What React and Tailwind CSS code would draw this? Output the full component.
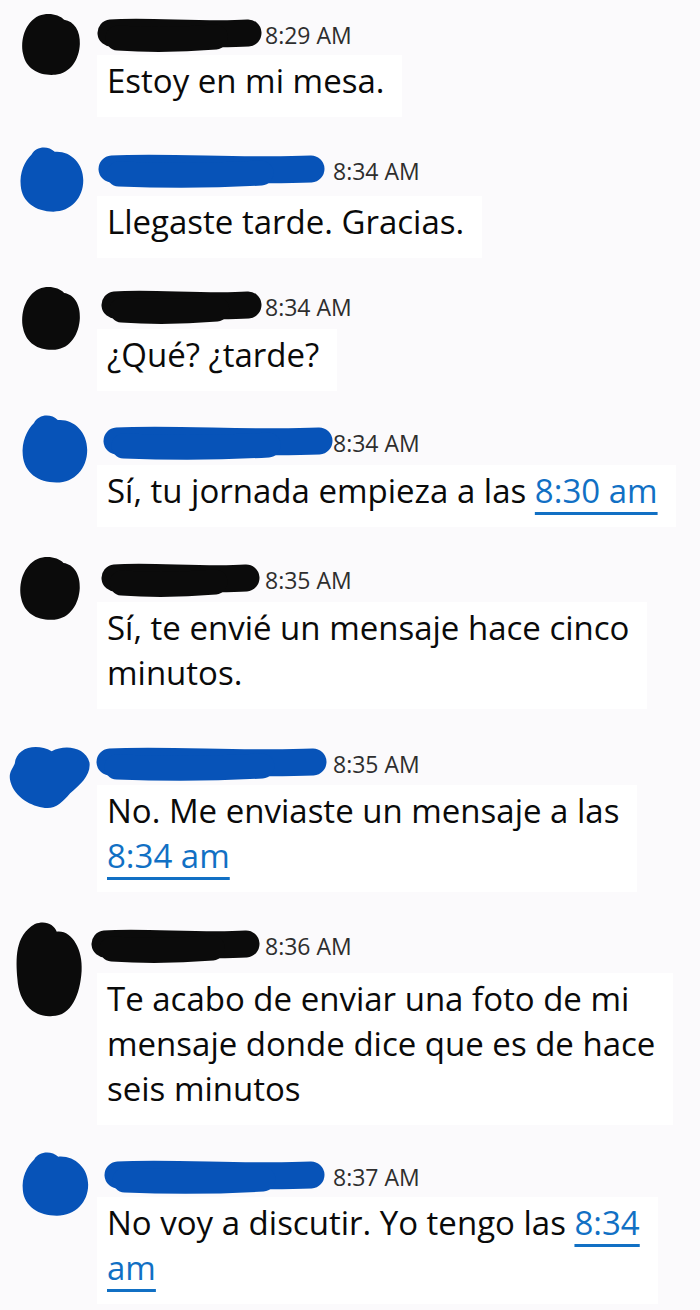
import React from 'react';

const BLACK = '#0b0b0b';
const BLUE = '#0753b8';

const blobs = {
  round: 'M30 6 C45 0 62 4 70 12 C86 14 96 30 95 50 C94 74 80 96 56 98 C32 100 10 90 5 66 C0 44 8 16 30 6 Z',
  bumpy: 'M20 14 C26 2 44 0 54 10 C76 8 96 26 96 52 C96 78 78 98 52 98 C26 98 6 84 4 60 C2 40 10 24 20 14 Z',
  heart: 'M8 34 C10 10 34 4 52 16 C68 6 92 10 97 32 C99 50 86 64 74 76 C64 90 56 99 44 97 C28 95 8 82 3 60 C0 48 5 42 8 34 Z',
  tall: 'M30 4 C44 0 56 4 60 12 C80 10 96 30 94 52 C92 76 80 98 54 98 C30 100 8 86 6 60 C4 40 2 16 30 4 Z',
};

// scribbled-over avatar
function Avatar({ color, shape, w, h, className }) {
  return (
    <svg width={w} height={h} viewBox="0 0 100 100" preserveAspectRatio="none" className={className}>
      <path d={blobs[shape]} fill={color} />
    </svg>
  );
}

// scribbled-over name
function NameScribble({ color, w, className }) {
  const h = 34;
  return (
    <svg width={w} height={h} viewBox={`0 0 ${w} ${h}`} className={className}>
      <g stroke={color} strokeLinecap="round" fill="none">
        <path d={`M15 15 C ${w * 0.3} 12, ${w * 0.65} 18, ${w - 14} 15`} strokeWidth="27" />
        <path d={`M22 20 C ${w * 0.3} 22, ${w * 0.5} 22, ${w * 0.72} 19`} strokeWidth="25" />
      </g>
    </svg>
  );
}

function Link({ children }) {
  return (
    <span className="text-[#1170c4] underline decoration-[3px] underline-offset-[9px]">{children}</span>
  );
}

export default function App() {
  const messages = [
    {
      color: BLACK, time: '8:29 AM', block: 'mt-[20px]', bubble: 'mt-[5px]',
      avatar: { shape: 'round', w: 63, h: 64, cls: 'ml-[20px] -mt-[8px]' },
      name: { w: 166, cls: '-ml-px' },
      lines: [['Estoy en mi mesa.']],
    },
    {
      color: BLUE, time: '8:34 AM', block: 'mt-[39px]', bubble: 'mt-[10px]',
      avatar: { shape: 'bumpy', w: 68, h: 68, cls: 'ml-[18px] -mt-[11px]' },
      name: { w: 228, cls: '' },
      lines: [['Llegaste tarde. Gracias.']],
    },
    {
      color: BLACK, time: '8:34 AM', block: 'mt-[34px]', bubble: 'mt-[7px]',
      avatar: { shape: 'round', w: 63, h: 66, cls: 'ml-[20px] -mt-[7px]' },
      name: { w: 162, cls: 'ml-[3px]' },
      lines: [['¿Qué? ¿tarde?']],
    },
    {
      color: BLUE, time: '8:34 AM', block: 'mt-[37px]', bubble: 'mt-[7px]',
      avatar: { shape: 'bumpy', w: 70, h: 71, cls: 'ml-[20px] -mt-[15px]' },
      name: { w: 232, cls: 'ml-[5px]' },
      lines: [['Sí, tu jornada empieza a las ', { link: '8:30 am' }]],
    },
    {
      color: BLACK, time: '8:35 AM', block: 'mt-[38px]', bubble: 'mt-[7px]',
      avatar: { shape: 'round', w: 65, h: 66, cls: 'ml-[18px] -mt-[10px]' },
      name: { w: 160, cls: 'ml-[3px]' },
      lines: [['Sí, te envié un mensaje hace cinco'], ['minutos.']],
    },
    {
      color: BLUE, time: '8:35 AM', block: 'mt-[40px]', bubble: 'mt-[6px]',
      avatar: { shape: 'heart', w: 84, h: 70, cls: 'ml-[8px] -mt-[9px]' },
      name: { w: 232, cls: '-ml-[2px]' },
      lines: [['No. Me enviaste un mensaje a las'], [{ link: '8:34 am' }]],
    },
    {
      color: BLACK, time: '8:36 AM', block: 'mt-[39px]', bubble: 'mt-[12px]',
      avatar: { shape: 'tall', w: 73, h: 98, cls: 'ml-[13px] -mt-[11px]' },
      name: { w: 170, cls: '-ml-[7px]' },
      lines: [
        ['Te acabo de enviar una foto de mi'],
        ['mensaje donde dice que es de hace'],
        ['seis minutos'],
      ],
    },
    {
      color: BLUE, time: '8:37 AM', block: 'mt-[37px]', bubble: 'mt-[5px]',
      avatar: { shape: 'bumpy', w: 71, h: 67, cls: 'ml-[20px] -mt-[12px]' },
      name: { w: 222, cls: 'ml-[6px]' },
      lines: [['No voy a discutir. Yo tengo las ', { link: '8:34' }], [{ link: 'am' }]],
    },
  ];

  return (
    <div className="min-h-screen w-[700px] bg-[#fbfafc] overflow-hidden pb-4" style={{ fontFamily: '"Open Sans", "Noto Sans", sans-serif' }}>
      {messages.map((m, i) => (
        <div key={i} className={`flex ${m.block}`}>
          <div className="w-[97px] shrink-0">
            <Avatar color={m.color} shape={m.avatar.shape} w={m.avatar.w} h={m.avatar.h} className={m.avatar.cls} />
          </div>
          <div className="flex flex-col items-start">
            <div className="flex items-center h-[30px]">
              <div className={m.color === BLUE ? 'w-[236px] flex items-center' : 'w-[168px] flex items-center'}>
                <NameScribble color={m.color} w={m.name.w} className={m.name.cls} />
              </div>
              <span className="text-[23px] text-[#2e2e2e] leading-none">{m.time}</span>
            </div>
            <div className={`bg-white pl-[10px] pr-[18px] pt-[3px] pb-[14px] ${m.bubble}`}>
              {m.lines.map((line, j) => (
                <div key={j} className="text-[33px] leading-[45px] text-[#0a0a0a] whitespace-nowrap">
                  {line.map((seg, k) =>
                    typeof seg === 'string' ? <span key={k}>{seg}</span> : <Link key={k}>{seg.link}</Link>
                  )}
                </div>
              ))}
            </div>
          </div>
        </div>
      ))}
    </div>
  );
}
